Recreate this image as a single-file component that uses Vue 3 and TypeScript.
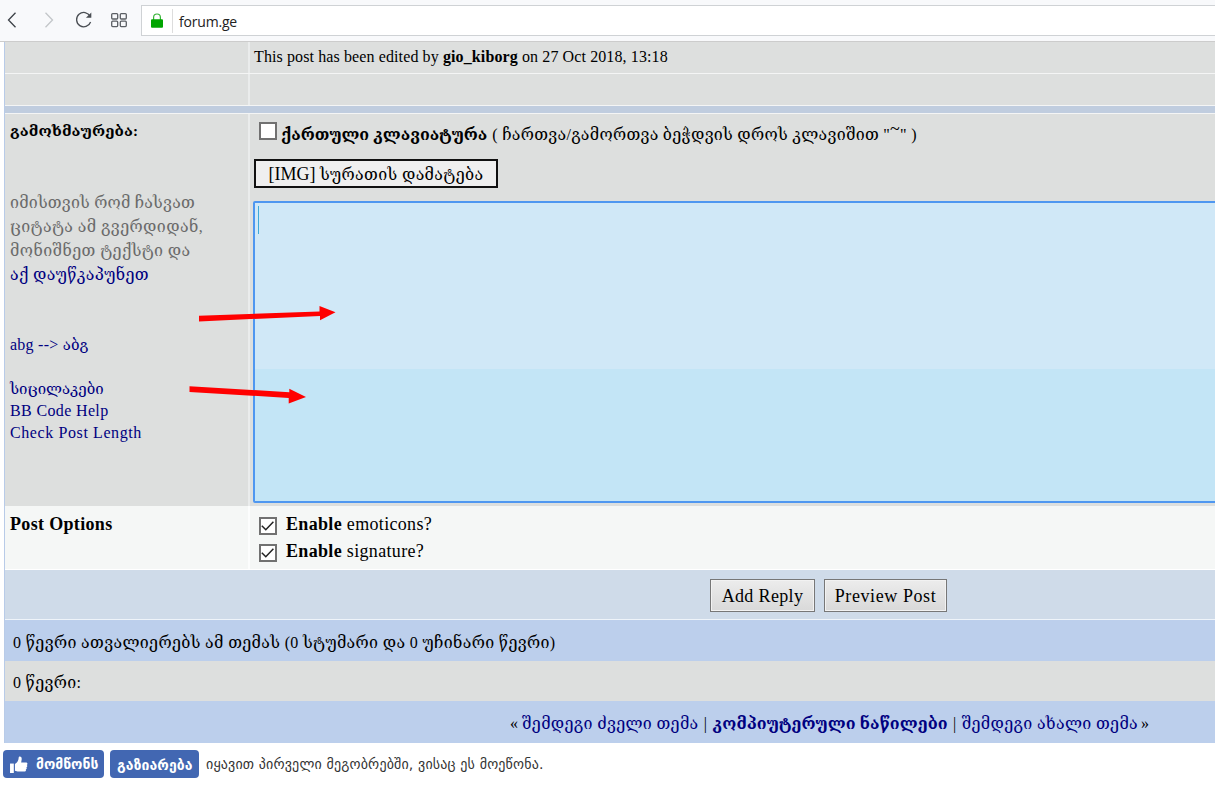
<script setup lang="ts">
interface PostOption {
  label: string
  checked: boolean
}

const postOptions: PostOption[] = [
  { label: 'emoticons?', checked: true },
  { label: 'signature?', checked: true },
]
</script>

<template>
  <div class="page">
    <header class="toolbar">
      <svg class="nav" width="141" height="41" viewBox="0 0 141 41" fill="none" stroke-width="1.3">
        <path d="M15.5 12.800 8.500 20l7 7.200" stroke="#3c4147" />
        <path d="M45.500 12.800l7 7.200-7 7.200" stroke="#c3c6c9" />
        <path d="M90.200 16.300A7.200 7.200 0 1 0 90.600 22" stroke="#4a4e53" />
        <path d="M91.300 12.600v5.200h-5.400z" fill="#4a4e53" />
        <g stroke="#5b5f64">
          <rect x="111.700" y="13.600" width="6" height="5.400" rx="1" />
          <rect x="120.300" y="13.600" width="6" height="5.400" rx="1" />
          <rect x="111.700" y="21.200" width="6" height="5.400" rx="1" />
          <rect x="120.300" y="21.200" width="6" height="5.400" rx="1" />
        </g>
      </svg>
      <div class="address">
        <svg class="lock" width="12" height="15" viewBox="0 0 12 15">
          <path d="M2.600 7V4.400a3.400 3.400 0 0 1 6.800 0V7" fill="none" stroke="#35b335" stroke-width="1.200" />
          <rect x="0" y="6.300" width="12" height="8.400" rx="1" fill="#00a500" />
        </svg>
        <span class="url">forum.ge</span>
      </div>
    </header>

    <main class="board">
      <section class="row edited">
        <div class="side"></div>
        <div class="main">This post has been edited by <b>gio_kiborg</b> on 27 Oct 2018, 13:18</div>
      </section>
      <section class="row blank">
        <div class="side"></div>
        <div class="main"></div>
      </section>
      <div class="band"></div>

      <section class="row reply">
        <div class="side">
          <b class="heading">გამოხმაურება:</b>
          <p class="hint">
            იმისთვის რომ ჩასვათ<br />
            <span class="loose">ციტატა ამ გვერდიდან,</span><br />
            <span class="loose">მონიშნეთ ტექსტი და</span><br />
            <a>აქ დაუწკაპუნეთ</a>
          </p>
          <a class="convert">abg --&gt; <span class="small-ka">აბგ</span></a>
          <nav class="tools">
            <a class="small-ka">სიცილაკები</a>
            <a>BB Code Help</a>
            <a class="wide">Check Post Length</a>
          </nav>
        </div>
        <div class="main">
          <label class="keyboard">
            <i class="box"></i>
            <b>ქართული კლავიატურა</b>
            <span class="keyboard-note">( ჩართვა/გამორთვა ბეჭდვის დროს კლავიშით "<sup>~</sup>" )</span>
          </label>
          <button class="img">[IMG] <span>სურათის დამატება</span></button>
          <div class="editor"><i class="caret"></i></div>
        </div>
      </section>

      <section class="row options">
        <div class="side"><b>Post Options</b></div>
        <div class="main">
          <label v-for="option in postOptions" :key="option.label">
            <i class="box">
              <svg v-if="option.checked" width="16" height="16" viewBox="0 0 16 16"><path d="M1.800 7.800l4 4 7.600-8" /></svg>
            </i>
            <span><b>Enable</b> {{ option.label }}</span>
          </label>
        </div>
      </section>

      <section class="actions">
        <button class="add">Add Reply</button>
        <button class="preview">Preview Post</button>
      </section>

      <section class="viewers">0 წევრი ათვალიერებს ამ თემას (0 სტუმარი და 0 უჩინარი წევრი)</section>
      <section class="members">0 წევრი:</section>
      <section class="topics">
        <span class="quote">«</span><a>შემდეგი ძველი თემა</a><i>|</i><a class="current">კომპიუტერული ნაწილები</a><i>|</i><a>შემდეგი ახალი თემა</a><span class="quote end">»</span>
      </section>
    </main>

    <footer class="social">
      <button class="like">
        <svg width="18" height="17" viewBox="0 0 19 18" fill="#fff">
          <path d="M0 8h4v10H0z" />
          <path d="M5.200 8.400C8 6.800 9 4.500 9.200 1.500 9.300.2 12.500 0 12.400 3.200L11.800 6.800h5c1.800 0 2.200 2 .9 2.700 1 .8.7 2.100-.4 2.500.8.900.4 2-.6 2.300.5 1-.1 2.200-1.700 2.200H9c-1.600 0-2.300-.6-3.800-1z" />
        </svg>
        <span>მომწონს</span>
      </button>
      <button class="share">გაზიარება</button>
      <span class="note">იყავით პირველი მეგობრებში, ვისაც ეს მოეწონა.</span>
    </footer>

    <svg class="arrows" width="150" height="110" viewBox="188 300 150 110">
      <path d="M199 315.800l120.500-4.300V306l16 6.200-15.500 8v-4.200L199 321.400z" />
      <path d="M189.500 386.300l99.800 5.900v-3.400l16.700 8.200-17.300 6.600v-5.700l-99.200-5.800z" />
    </svg>
  </div>
</template>

<style>
html, body { background: #fff; overflow: hidden; }
</style>

<style scoped>
* { box-sizing: border-box; }
.page { position: relative; width: 1215px; height: 800px; overflow: hidden; background: #fff; font-family: "Liberation Serif", "DejaVu Serif", serif; font-size: 16px; color: #000; white-space: nowrap; }
a { color: #000080; }
button { font-family: inherit; margin: 0; padding: 0; white-space: nowrap; color: #000; }

.toolbar { display: flex; height: 42px; background: #f8f9fb; border-bottom: 1px solid #ccc; }
.nav { flex: none; }
.address { display: flex; flex: none; align-items: center; margin-top: 5px; width: 1090px; height: 31px; border: 1px solid #cfd2d5; background: #fff; padding-left: 9px; }
.url { margin-left: 9px; height: 24px; padding-left: 6px; border-left: 1px solid #ddd; font: 14px/25px "Open Sans", sans-serif; letter-spacing: -0.2px; color: #222; }

.board { margin-left: 4px; width: 1211px; border-left: 1px solid #b8cbe8; }
.row { display: flex; background: #dddfde; border-bottom: 1px solid #f4f5f5; }
.side { width: 245px; flex: none; padding-left: 5px; border-right: 2px solid #eaecec; }
.main { flex: 1; padding-left: 4px; }
.edited { height: 32px; line-height: 29px; letter-spacing: 0.11px; }
.blank { height: 32px; }
.band { height: 8px; background: #c0cddf; border-bottom: 1px solid #f4f5f5; }

.reply { height: 392px; border-bottom: 0; }
.heading { display: block; padding-top: 7px; line-height: 20px; font-size: 15px; letter-spacing: 0.1px; }
.hint { margin: 50px 0 0; line-height: 24px; letter-spacing: 0.2px; color: #6b6b6b; }
.hint .loose { letter-spacing: 0.4px; }
.hint a { letter-spacing: 0.33px; }
.convert { display: block; margin-top: 47px; line-height: 22px; letter-spacing: 0.25px; }
.small-ka { font-size: 15px; letter-spacing: 0; }
.tools { display: flex; flex-direction: column; margin-top: 22px; line-height: 22px; letter-spacing: 0.36px; }
.tools .wide { letter-spacing: 0.6px; }
.box { width: 18px; height: 18px; border: 2px solid #717171; background: #fff; flex: none; }
.keyboard { display: flex; height: 38px; line-height: 38px; padding: 2px 0 0 5px; }
.keyboard .box { margin: 6px 4px 0 0; }
.keyboard-note { margin-left: 5px; letter-spacing: 0.28px; }
sup { font-size: 18px; line-height: 0; vertical-align: 5px; }
.img { display: block; width: 244px; height: 29px; margin-top: 7px; border: 2px solid #111; padding-top: 1px; background: #efefef; font-size: 18px; line-height: 24px; }
.img span { font-size: 16px; letter-spacing: 0.35px; }
.editor { margin: 13px 0 0 -1px; width: 980px; height: 302px; border: 2px solid #4f97f0; border-radius: 2px; padding: 3px; background: linear-gradient(#d0e8f7 0 166px, #c3e5f6 166px); }
.caret { display: block; width: 1px; height: 28px; background: #3fa9d8; }

.options { height: 64px; background: #f5f7f6; border-color: #fff; font-size: 18px; letter-spacing: 0.33px; }
.options .side { padding-top: 8px; border-color: #fcfdfd; }
.options .main { padding: 4px 0 0 9px; }
.options label { display: flex; height: 27px; line-height: 28px; }
.options .box { margin: 7px 9px 0 0; }
.options .box svg { display: block; margin: -1px; fill: none; stroke: #222; stroke-width: 1.5; }

.actions { display: flex; gap: 9px; height: 49px; padding: 9px 0 0 705px; background: #cfdbe9; }
.actions button { height: 33px; border: 1px solid #777; padding-top: 1px; box-shadow: inset 0 0 0 1px #f2f2f2; background: linear-gradient(#ececec, #d9d9d9); font-size: 18px; }
.actions .add { width: 105px; letter-spacing: 0.35px; }
.actions .preview { width: 123px; letter-spacing: 0.58px; }

.viewers { height: 42px; line-height: 45px; border-top: 1px solid #eff4fa; background: #bccfec; padding-left: 8px; letter-spacing: 0.34px; }
.members { height: 40px; line-height: 43px; background: #dddfde; padding-left: 8px; letter-spacing: 0.3px; }
.topics { display: flex; height: 42px; line-height: 45px; background: #bccfec; padding-left: 505px; letter-spacing: 0.33px; }
.topics .current { font-weight: bold; letter-spacing: 0.1px; }
.topics i { font-style: normal; width: 14px; text-align: center; }
.quote { width: 12px; }
.quote.end { margin-left: 3px; }

.social { display: flex; padding: 7px 0 0 3px; font-family: "DejaVu Sans", sans-serif; font-size: 14px; }
.social button { display: flex; align-items: center; height: 28px; border: 0; border-radius: 4px; background: #4267b2; color: #fff; font-weight: bold; font-size: 14px; }
.social .like { width: 101px; padding-left: 7px; gap: 8px; }
.social .share { width: 89px; margin-left: 6px; padding: 2px 0 0 7px; letter-spacing: 0.1px; }
.note { margin-left: 7px; line-height: 29px; letter-spacing: 0.16px; color: #333; }

.arrows { position: absolute; left: 188px; top: 300px; fill: #f00; }
</style>
